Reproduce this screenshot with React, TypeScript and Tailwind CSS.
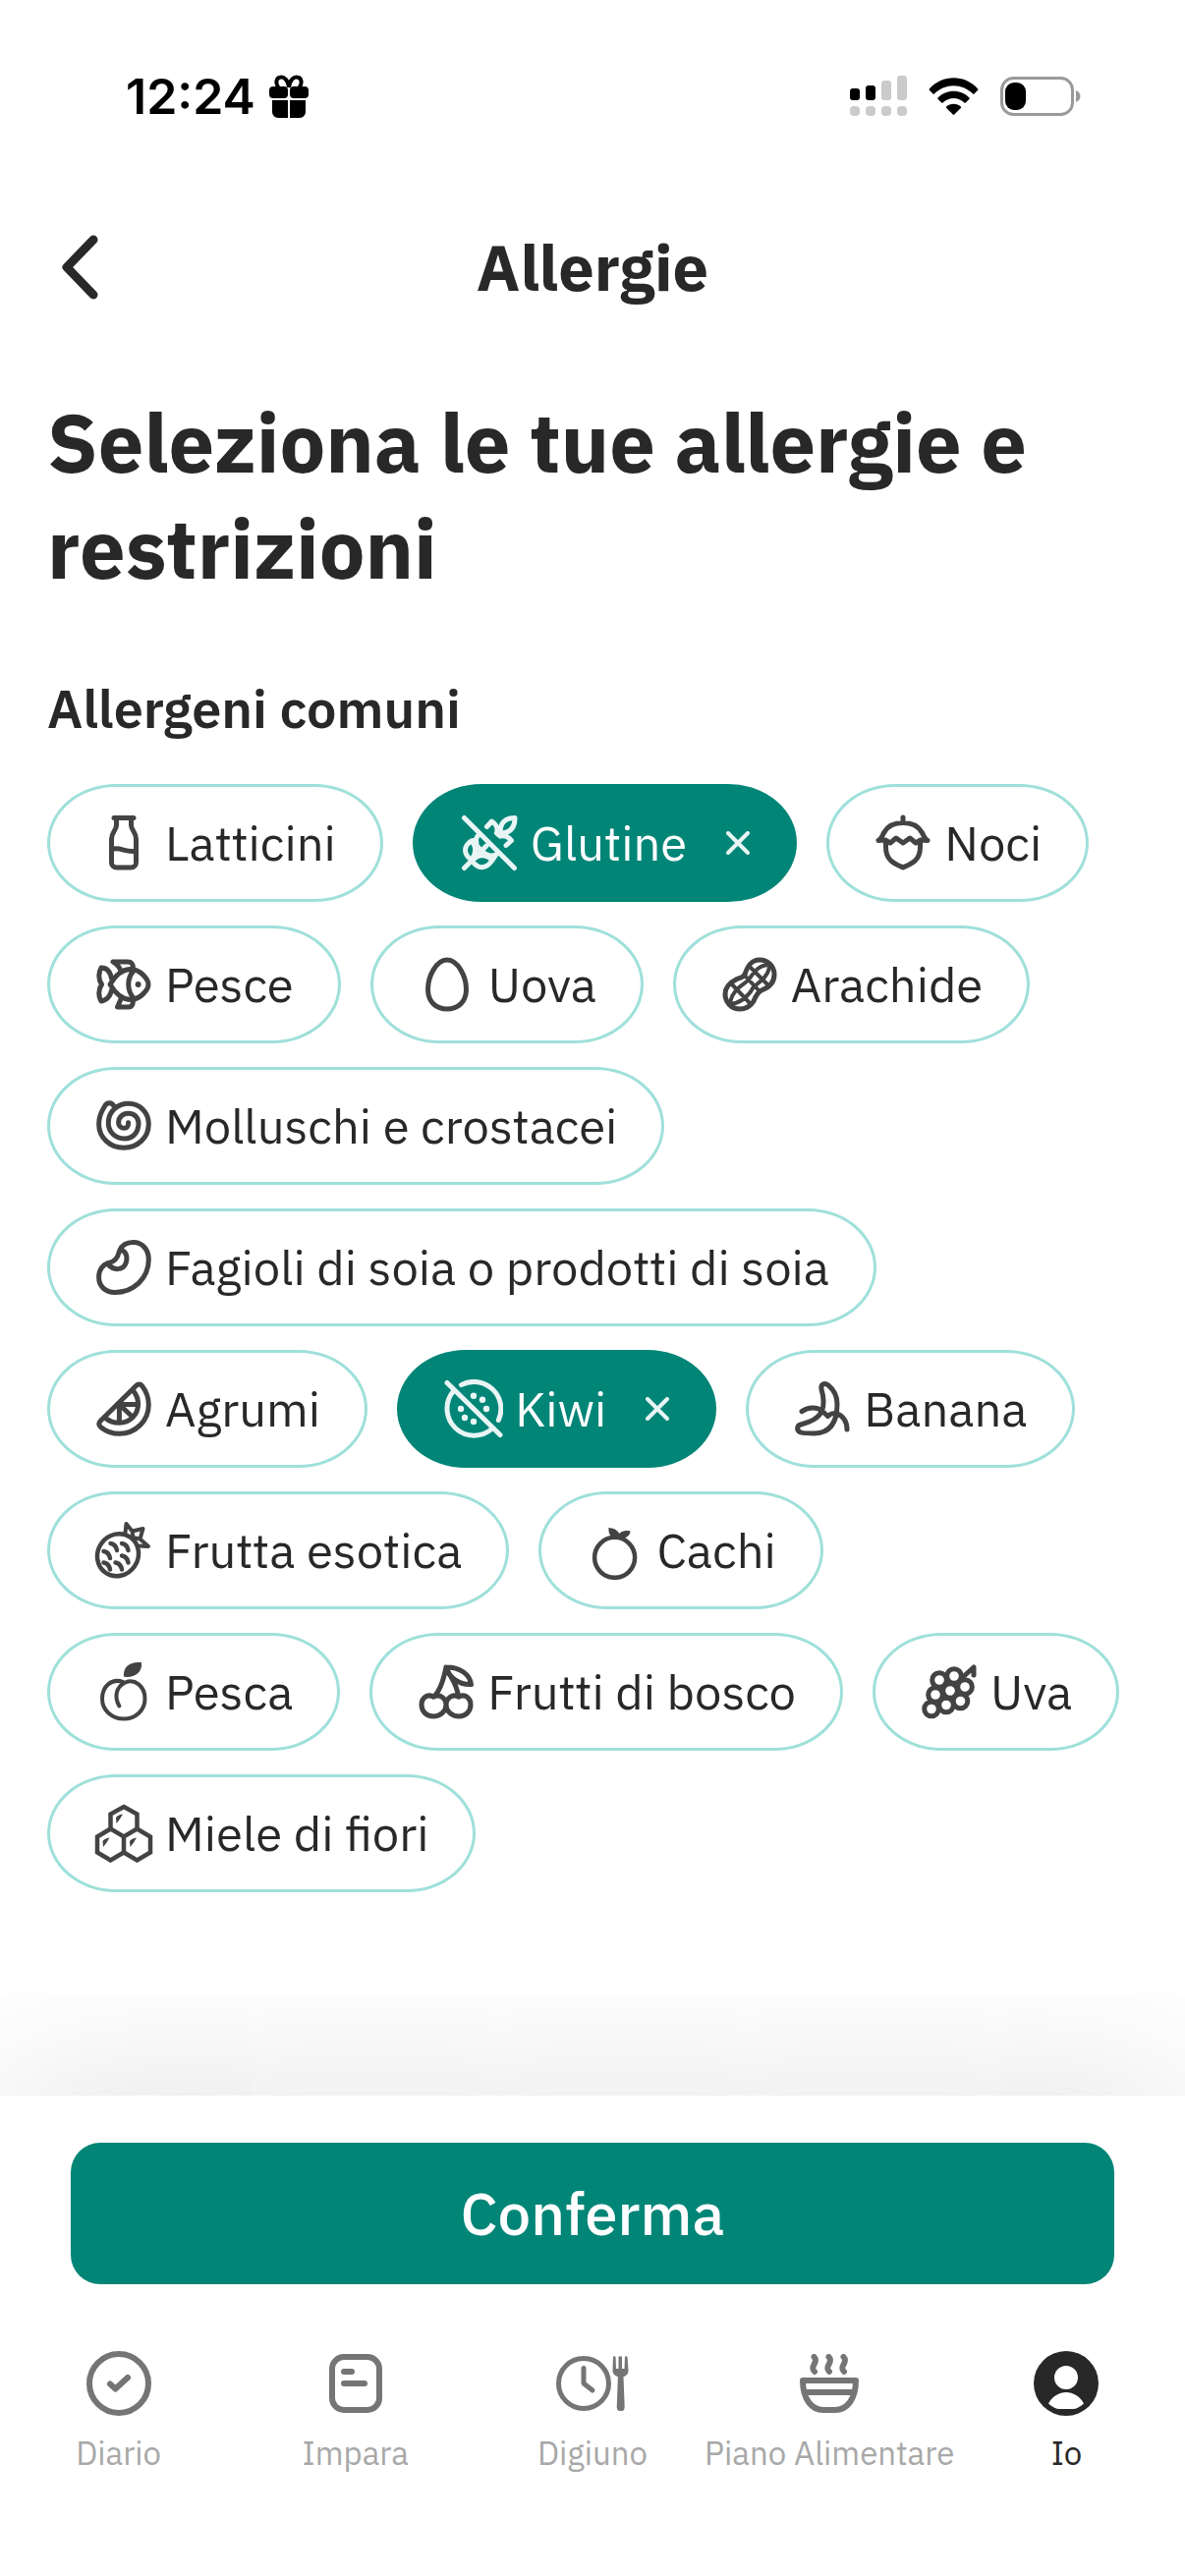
import { useState } from 'react';
import type { ReactNode } from 'react';

type Allergen = {
  id: string;
  label: string;
  icon: ReactNode;
};

const allergens: Allergen[] = [
  {
    id: 'milk',
    label: 'Latticini',
    icon: (
      <path d="M20 4.5H40M22.5 5V12c0 5-5 7-5 14V50a5 5 0 0 0 5 5h15a5 5 0 0 0 5-5V26c0-7-5-9-5-14V5M17.5 36.5c9-3 15 4 25 1.5" />
    ),
  },
  {
    id: 'gluten',
    label: 'Glutine',
    icon: (
      <>
        <path d="M4.5 4.5L55.5 55.5M4.5 55.5L27 33" />
        <path d="M41 20C41 9 46 4.5 56 4.5C56 15 51 20 41 20zM27.5 13.5L32.5 8C37 11 39 14 37.5 20M47 32.5L52.5 27.5C49 23 45 22 41 23M37.5 20L41 23" />
        <path d="M11.5 47C3 41 4 33 11.5 28C17 33 17 41 11.5 47zM12.5 48C18 41 27 41 33 47.5C27 57 18 57 12.5 48zM11.5 28C14 27 15.5 28 17 30C15.5 27 17 24 19.5 21M22 38C17 33 16 31 17 30M22 38C28 43.5 32 44 37.5 41.5M33 47.5L36 43" />
      </>
    ),
  },
  {
    id: 'nuts',
    label: 'Noci',
    icon: (
      <path d="M30 4V9M5 27.5C8 26 9 22 11 19C15 12 22 9.5 30 9.5S45 12 49 19C51 22 52 26 55 27.5M5 27.5L12 27L17 30L23 25L30 30L37 25L43 30L48 27L55 27.5M12.5 29V34C12.5 48 21 51 30 55C39 51 47.5 48 47.5 34V29" />
    ),
  },
  {
    id: 'fish',
    label: 'Pesce',
    icon: (
      <>
        <path d="M16 30C22 20 29 14.5 37 14.5C47 14.5 55 25 55 30S47 45.5 37 45.5C29 45.5 22 40 16 30zM40 16C33 24 33 36 40 44" />
        <path d="M26.5 15C25 11 22 9 19 7H34C38 7 39.5 9 39.5 14M27 45L23.5 53H35C38 53 39.5 51 39.5 46M17.5 24C16 16 12 13 7 13C4 18 4 25 7.5 30C4 35 4 42 7 47C12 46 16 43 17.5 36" />
        <circle cx="44.6" cy="30" r="3" fill="currentColor" stroke="none" />
      </>
    ),
  },
  {
    id: 'eggs',
    label: 'Uova',
    icon: <path d="M30 5C19 5 10.5 22 10.5 35S19 55 30 55 49.5 48 49.5 35 41 5 30 5z" />,
  },
  {
    id: 'peanut',
    label: 'Arachide',
    icon: (
      <>
        <path d="M25 20C28 10 32 5 40 5C49 5 55 12 55 20C55 28 50 33 42 36C38 38 36 42 34 47C31 52 26 55 20 55C11 55 5 48 5 40C5 32 10 28 17 24.5C22 22 24 23 25 20z" />
        <path
          strokeWidth="4"
          d="M10 50C11 37 22 31 27 27S36 10 50 10M10 50C23 49 31 38 33 34S50 24 50 10M30 12L49 31M24 20L40 37M11 29L31 50"
        />
      </>
    ),
  },
  {
    id: 'shellfish',
    label: 'Molluschi e crostacei',
    icon: (
      <path d="M34.6 26.7C35 31 32.5 32.3 30.7 32.3C27 32.3 24.6 30 24.6 26.7C24.6 21 29 17.3 34.6 17.3C41 17.3 45 22 45 27.3C45 37 39 43 30.7 43C21 43 14.3 36 14.3 26.7C14.3 15 24 7.3 34.6 7.3C47 7.3 55.3 17 55.3 28C55.3 42 44 52.3 30 52.3C16 52.3 4.6 42 4.6 28C4.6 20 8 14 10.5 10C13 5.5 18 6 20 10" />
    ),
  },
  {
    id: 'soy',
    label: 'Fagioli di soia o prodotti di soia',
    icon: (
      <path d="M39.6 4.5C49 4.5 55.3 12 55.3 22C55.3 41 40 55.5 21 55.5C11 55.5 4.6 49 4.6 40C4.6 32 9 27 15 25.5C21 24 23.5 21 25 15C27 8 32 4.5 39.6 4.5zM27 12C33 14 34 20 32 26C29 33 20 34 13 26" />
    ),
  },
  {
    id: 'citrus',
    label: 'Agrumi',
    icon: (
      <path d="M42.5 6.5L6 42.5C4 45 4.5 47 7 49C12 53 18 55.3 25.4 55.3C42 55.3 55.3 42 55.3 26C55.3 18 52 11 48.5 6.5C47 4.5 44.5 4.5 42.5 6.5zM40 12C43 16 44.6 20 44.6 25C44.6 36 36 44.3 25.4 44.3C20 44.3 15 42.5 11.5 39.5M25.4 25.5H44.6M25.4 25.5L38.6 38M25.4 25.5V44.3" />
    ),
  },
  {
    id: 'kiwi',
    label: 'Kiwi',
    icon: (
      <>
        <path d="M3 3.5L57 56.5M17.5 5.6A27.5 27.5 0 0 1 55.3 41.5M9 12.5A27.5 27.5 0 0 0 49 50" />
        <g fill="currentColor" stroke="none">
          <circle cx="30" cy="16.7" r="3.2" />
          <circle cx="39" cy="20.7" r="3.2" />
          <circle cx="43" cy="30" r="3.2" />
          <circle cx="17" cy="30" r="3.2" />
          <circle cx="21" cy="39" r="3.2" />
          <circle cx="30" cy="43" r="3.2" />
        </g>
      </>
    ),
  },
  {
    id: 'banana',
    label: 'Banana',
    icon: (
      <path d="M35.5 37.5L29.5 32C32 26 31 17 29 10C28 5 32 3 36 6C42 11 45 18 45 25C45 42 39 54.5 22 55C16 55 11 55 8 54C3 52 4 47 8 46C18 43 26 40 29.5 32M9 32.7C16 28 24 28 29.5 32M35.5 37.5C38 35 42 34 44.5 35C51 37 55 43 55 51" />
    ),
  },
  {
    id: 'exotic',
    label: 'Frutta esotica',
    icon: (
      <>
        <ellipse cx="24" cy="34.7" rx="20.5" ry="22" transform="rotate(35 24 34.7)" strokeWidth="4.5" />
        <path
          strokeWidth="4"
          d="M31.5 12L32.5 3L38.5 10.5L49.5 8L46.5 18.5L55 26L44.5 25.5M38.5 10.5L39.5 17L46.5 18.5"
        />
        <path
          strokeWidth="4.5"
          d="M16.5 23q5.5 1 6.5 7M28 23q5.5 1 6.5 7M9.5 31q5.5 1 6.5 7M28 35.5q5.5 1 6.5 7M9.5 42.5q5.5 1 6.5 7M21.5 42.5q5.5 1 6.5 7"
        />
      </>
    ),
  },
  {
    id: 'persimmon',
    label: 'Cachi',
    icon: (
      <>
        <circle cx="29.6" cy="37.3" r="20.5" strokeWidth="4.5" />
        <path
          fill="currentColor"
          stroke="none"
          d="M23.5 7C23 12 25 17 30 18H39C43 16 45.5 14 45.5 10.5C41 9.5 37 10 34.5 13C32 9 28 7 23.5 7z"
        />
      </>
    ),
  },
  {
    id: 'peach',
    label: 'Pesca',
    icon: (
      <>
        <path
          strokeWidth="4"
          d="M29 20C18 16 8 24 8 37C8 49 18 57.5 30 57.5S51.5 49 51.5 37C51.5 24 41 16.5 31.5 20.5C22 25 20 35 25.4 44.5"
        />
        <path fill="currentColor" stroke="none" d="M30 14.8C29 5 36 -1 48 0.3C49 10 42 16 30 14.8z" />
      </>
    ),
  },
  {
    id: 'berries',
    label: 'Frutti di bosco',
    icon: (
      <>
        <path d="M17 35C10 31.5 5 37 5 43C5 50 10 55 17 55S30 50 30 43C30 37 24 31.5 17 35zM43 35C36 31.5 30 37 30 43C30 50 36 55 43 55S55 50 55 43C55 37 50 31.5 43 35z" />
        <path d="M17.5 35C25 28 28 15 30 5C44 5 54 12 55.5 22.5C44 23 33 16 30 5C33 14 41 20 42.5 35" />
      </>
    ),
  },
  {
    id: 'grapes',
    label: 'Uva',
    icon: (
      <>
        <circle cx="20" cy="18" r="7.3" />
        <circle cx="35" cy="14" r="7.3" />
        <circle cx="16" cy="33" r="7.3" />
        <circle cx="31" cy="29" r="7.3" />
        <circle cx="46" cy="25" r="7.3" />
        <circle cx="12" cy="47.5" r="7.3" />
        <circle cx="27" cy="43.5" r="7.3" />
        <circle cx="41.5" cy="39.5" r="7.3" />
        <path d="M44 15L55 5V13" />
      </>
    ),
  },
  {
    id: 'honey',
    label: 'Miele di fiori',
    icon: (
      <>
        <path
          strokeLinejoin="miter"
          strokeWidth="4.5"
          d="M30 3L43.5 10.5V25.5L30 33.5L16.5 25.5V10.5zM16.5 25.5L3 33.5V49.5L16.5 57.5L30 49.5V33.5M43.5 25.5L57 33.5V49.5L43.5 57.5L30 49.5"
        />
        <path
          fill="currentColor"
          stroke="none"
          d="M22 14q2-3 7-3.5l-3 5l-3.5 4.5zM8.5 38q2-3 7-3.5l-3 5l-3.5 4.5zM36 38q2-3 7-3.5l-3 5l-3.5 4.5z"
        />
      </>
    ),
  },
];

const tabs = [
  {
    label: 'Diario',
    icon: (
      <svg width="66" height="66" viewBox="0 0 66 66" fill="none" stroke="currentColor" strokeWidth="6" strokeLinecap="round" strokeLinejoin="round">
        <circle cx="33" cy="33" r="30" />
        <path d="M24 33.5L29.5 38.5L42 27" />
      </svg>
    ),
  },
  {
    label: 'Impara',
    icon: (
      <svg width="54" height="60" viewBox="0 0 54 60" fill="none" stroke="currentColor" strokeWidth="6" strokeLinecap="round">
        <rect x="3" y="3" width="48" height="54" rx="12" />
        <path d="M15 18H23M15 30H36" />
      </svg>
    ),
  },
  {
    label: 'Digiuno',
    icon: (
      <svg width="74" height="56" viewBox="0 0 74 56" fill="none" stroke="currentColor" strokeWidth="5" strokeLinecap="round" strokeLinejoin="round">
        <circle cx="28" cy="28" r="25.5" />
        <path d="M28 12.5V28L37 35" />
        <path
          fill="currentColor"
          stroke="none"
          d="M58 .5h2.5l.5 12.5h2.5V.5h3.5V13h2.5L70 .5h2.5L73.5 15c0 3-2 5.5-5 6.2l1.2 31a4 4 0 0 1-8 0l1.2-31c-3-.7-5.4-3.2-5.4-6.2z"
        />
      </svg>
    ),
  },
  {
    label: 'Piano Alimentare',
    icon: (
      <svg width="60" height="60" viewBox="0 0 60 60" fill="none" stroke="currentColor" strokeWidth="6" strokeLinecap="round" strokeLinejoin="round">
        <path d="M14.5 3C20 9 9 12 15 18M29.5 3C35 9 24 12 30 18M44.5 3C50 9 39 12 45 18" />
        <path d="M3 27H57C57 46 48 57 36 57H24C12 57 3 46 3 27zM6 39H54" />
      </svg>
    ),
  },
  {
    label: 'Io',
    icon: (
      <svg width="66" height="66" viewBox="0 0 66 66">
        <circle cx="33" cy="33" r="33" fill="currentColor" />
        <circle cx="33" cy="27" r="12" fill="#fff" />
        <path fill="#fff" d="M15 53.5C19 46 26 42 33 42s14 4 18 11.5C47.5 57 43 59 40 59H26c-3 0-7.5-2-11-5.5z" />
      </svg>
    ),
  },
];

const StatusBar = () => (
  <div className="flex h-[196px] items-center justify-between pl-32 pr-[106px]">
    <div className="flex items-center gap-3.5">
      <span className="font-['Inter',sans-serif] text-[50px] leading-[60px] font-semibold text-black">12:24</span>
      <svg width="40" height="44" viewBox="0 0 40 44" fill="#000">
        <rect x="0" y="12" width="19" height="12" rx="4" />
        <rect x="21" y="12" width="19" height="12" rx="4" />
        <path d="M3 26H19V44H9a6 6 0 0 1-6-6zM21 26H37V38a6 6 0 0 1-6 6H21z" />
        <path d="M20 13C19 5 15 2 11.5 2.5C7 3 6 9 9.5 13M20 13C21 5 25 2 28.5 2.5C33 3 34 9 30.5 13" fill="none" stroke="#000" strokeWidth="4" />
      </svg>
    </div>
    <div className="flex items-center gap-[22px]">
      <svg width="58" height="42" viewBox="0 0 58 42">
        <rect x="0" y="13" width="10" height="12" rx="3" />
        <rect x="16" y="10" width="10" height="15" rx="3" />
        <g fill="#cbcbcb">
          <rect x="32" y="5" width="10" height="20" rx="3" />
          <rect x="48" y="0" width="10" height="25" rx="3" />
          <rect x="0" y="31" width="10" height="10" rx="4" />
          <rect x="16" y="31" width="10" height="10" rx="4" />
          <rect x="32" y="31" width="10" height="10" rx="4" />
          <rect x="48" y="31" width="10" height="10" rx="4" />
        </g>
      </svg>
      <svg width="51" height="38" viewBox="0 0 51 38">
        <path d="M.8 11.5C14-3.5 37-3.5 50.2 11.5a1 1 0 0 1 0 1.3L46.5 16.5a1 1 0 0 1-1.4 0C34 5.5 17 5.5 5.9 16.5a1 1 0 0 1-1.4 0L.8 12.8a1 1 0 0 1 0-1.3z" />
        <path d="M9.5 20.5C18 11.5 33 11.5 41.5 20.5a1 1 0 0 1 0 1.3L37.8 25.5a1 1 0 0 1-1.4 0C30 19.5 21 19.5 14.6 25.5a1 1 0 0 1-1.4 0L9.5 21.8a1 1 0 0 1 0-1.3z" />
        <path d="M18.2 29.5C22 25.8 29 25.8 32.8 29.5a1 1 0 0 1 0 1.4L26.3 37.5a1 1 0 0 1-1.5 0L18.2 30.9a1 1 0 0 1 0-1.4z" />
      </svg>
      <svg width="82" height="40" viewBox="0 0 82 40">
        <rect x="1.5" y="1.5" width="72" height="37" rx="12" fill="none" stroke="#9a9a9a" strokeWidth="3" />
        <rect x="5" y="6" width="21" height="28" rx="9" />
        <path d="M77 14C83 16 83 24 77 26z" fill="#9a9a9a" />
      </svg>
    </div>
  </div>
);

const Chip = ({ item, selected, onToggle }: { item: Allergen; selected: boolean; onToggle: () => void }) => (
  <button
    type="button"
    aria-pressed={selected}
    onClick={onToggle}
    className={`flex h-[120px] items-center rounded-[70px/60px] border-[3px] px-[45px] text-[49px] leading-[60px] whitespace-nowrap ${
      selected ? 'border-[#008577] bg-[#008577] text-white' : 'border-[#9fe0da] bg-white text-[#282828]'
    }`}
  >
    <svg
      width="60"
      height="60"
      viewBox="0 0 60 60"
      fill="none"
      stroke="currentColor"
      strokeWidth="5"
      strokeLinecap="round"
      strokeLinejoin="round"
      className={`mr-3 shrink-0 ${selected ? 'text-[#e8f5f4]' : 'text-[#434343]'}`}
    >
      {item.icon}
    </svg>
    {item.label}
    {selected && (
      <svg
        width="24"
        height="24"
        viewBox="0 0 24 24"
        stroke="#e8f5f4"
        strokeWidth="4"
        strokeLinecap="round"
        className="ml-10 shrink-0"
      >
        <path d="M2 2L22 22M22 2L2 22" />
      </svg>
    )}
  </button>
);

const App = () => {
  const [selected, setSelected] = useState<string[]>(['gluten', 'kiwi']);
  const [activeTab, setActiveTab] = useState('Io');

  const toggle = (id: string) => {
    setSelected((prev) => (prev.includes(id) ? prev.filter((s) => s !== id) : [...prev, id]));
  };

  return (
    <div className="flex min-h-screen flex-col overflow-x-hidden bg-white font-['IBM_Plex_Sans','Noto_Sans',sans-serif] text-[#282828]">
      <StatusBar />

      <header className="grid h-[152px] grid-cols-[1fr_auto_1fr] items-center px-12">
        <button type="button" aria-label="Indietro" className="justify-self-start p-3">
          <svg width="42" height="70" viewBox="0 0 42 70" fill="none" stroke="currentColor" strokeWidth="9" strokeLinecap="round" strokeLinejoin="round">
            <path d="M35 7L8 35L35 63" />
          </svg>
        </button>
        <h1 className="text-[65px] leading-[84px] font-bold">Allergie</h1>
      </header>

      <main className="flex-1 pt-12 pr-14 pl-12">
        <h2 className="text-[83px] leading-[108px] font-bold">Seleziona le tue allergie e restrizioni</h2>
        <h3 className="mt-[73px] text-[54px] leading-[72px] font-semibold">Allergeni comuni</h3>
        <div className="mt-[41px] flex flex-wrap gap-x-[30px] gap-y-6">
          {allergens.map((item) => (
            <Chip key={item.id} item={item} selected={selected.includes(item.id)} onToggle={() => toggle(item.id)} />
          ))}
        </div>
      </main>

      <footer className="bg-white pt-12 pb-[103px] shadow-[0_0_180px_rgba(0,0,0,0.12)]">
        <div className="px-18">
          <button type="button" className="h-36 w-full rounded-[30px] bg-[#008577] text-[60px] font-medium text-white">
            Conferma
          </button>
        </div>
        <nav className="mt-[68px] grid grid-cols-5">
          {tabs.map(({ label, icon }) => (
            <a
              key={label}
              href="#"
              aria-current={activeTab === label ? 'page' : undefined}
              onClick={() => setActiveTab(label)}
              className={`flex flex-col items-center gap-4 ${activeTab === label ? 'text-[#282828]' : 'text-[#757575]'}`}
            >
              <span className="flex h-[66px] items-center">{icon}</span>
              <span className={`text-[33px] leading-[44px] whitespace-nowrap ${activeTab === label ? '' : 'text-[#a8a8a8]'}`}>
                {label}
              </span>
            </a>
          ))}
        </nav>
      </footer>
    </div>
  );
};

export default App;
